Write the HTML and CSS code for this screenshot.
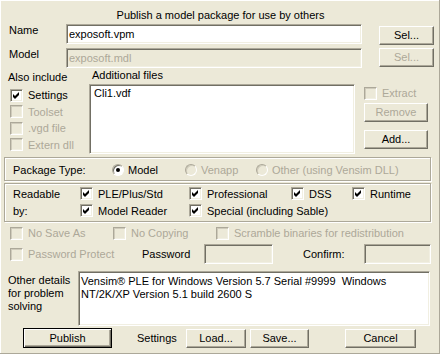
FILE: index.html
```html
<!DOCTYPE html>
<html lang="en">
<head>
    <meta charset="UTF-8">
    <title>Publish a model package</title>
    <link rel="stylesheet" href="styles.css">
</head>
<body>
    <div class="dialog">
        <div class="title">Publish a model package for use by others</div>

        <!-- Name / Model -->
        <div class="row name-row">
            <span class="lbl">Name</span>
            <div class="field field-wide">exposoft.vpm</div>
            <button class="btn btn-sel">Sel...</button>
        </div>
        <div class="row model-row">
            <span class="lbl">Model</span>
            <div class="field field-wide disabled">exposoft.mdl</div>
            <button class="btn btn-sel disabled">Sel...</button>
        </div>

        <!-- Files -->
        <div class="files">
            <div class="include">
                <div class="include-title">Also include</div>
                <div class="check"><span class="cb on"><svg width="9" height="9" viewBox="0 0 9 9"><path d="M1 3 L3 5 L7 1 L7 4 L3 8 L1 6 Z" fill="#000"/></svg></span>Settings</div>
                <div class="check off"><span class="cb"></span>Toolset</div>
                <div class="check off"><span class="cb"></span>.vgd file</div>
                <div class="check off"><span class="cb"></span>Extern dll</div>
            </div>
            <div class="additional">
                <div class="additional-title">Additional files</div>
                <div class="listbox">Cli1.vdf</div>
            </div>
            <div class="file-actions">
                <div class="check off extract"><span class="cb"></span>Extract</div>
                <button class="btn btn-side btn-remove disabled">Remove</button>
                <button class="btn btn-side btn-add">Add...</button>
            </div>
        </div>

        <!-- Package type -->
        <div class="group package">
            <span class="pt-label">Package Type:</span>
            <span class="opt opt-model"><span class="rb on"></span>Model</span>
            <span class="opt opt-venapp off"><span class="rb"></span>Venapp</span>
            <span class="opt off"><span class="rb"></span>Other (using Vensim DLL)</span>
        </div>

        <!-- Readable by -->
        <div class="group readable">
            <span class="rd-label">Readable</span>
            <div class="check"><span class="cb on"><svg width="9" height="9" viewBox="0 0 9 9"><path d="M1 3 L3 5 L7 1 L7 4 L3 8 L1 6 Z" fill="#000"/></svg></span>PLE/Plus/Std</div>
            <div class="check"><span class="cb on"><svg width="9" height="9" viewBox="0 0 9 9"><path d="M1 3 L3 5 L7 1 L7 4 L3 8 L1 6 Z" fill="#000"/></svg></span>Professional</div>
            <div class="check"><span class="cb on"><svg width="9" height="9" viewBox="0 0 9 9"><path d="M1 3 L3 5 L7 1 L7 4 L3 8 L1 6 Z" fill="#000"/></svg></span>DSS</div>
            <div class="check"><span class="cb on"><svg width="9" height="9" viewBox="0 0 9 9"><path d="M1 3 L3 5 L7 1 L7 4 L3 8 L1 6 Z" fill="#000"/></svg></span>Runtime</div>
            <span class="rd-label">by:</span>
            <div class="check"><span class="cb on"><svg width="9" height="9" viewBox="0 0 9 9"><path d="M1 3 L3 5 L7 1 L7 4 L3 8 L1 6 Z" fill="#000"/></svg></span>Model Reader</div>
            <div class="check span-rest"><span class="cb on"><svg width="9" height="9" viewBox="0 0 9 9"><path d="M1 3 L3 5 L7 1 L7 4 L3 8 L1 6 Z" fill="#000"/></svg></span>Special (including Sable)</div>
        </div>

        <!-- Protection -->
        <div class="row protect-row">
            <div class="check off cell-protect"><span class="cb"></span>No Save As</div>
            <div class="check off cell-protect"><span class="cb"></span>No Copying</div>
            <div class="check off"><span class="cb"></span>Scramble binaries for redistribution</div>
        </div>
        <div class="row password-row">
            <div class="check off cell-password"><span class="cb"></span>Password Protect</div>
            <span class="pw-label">Password</span>
            <div class="field field-pw disabled"></div>
            <span class="confirm-label">Confirm:</span>
            <div class="field field-confirm disabled"></div>
        </div>

        <!-- Details -->
        <div class="row details">
            <div class="details-label">Other details<br>for problem<br>solving</div>
            <div class="field details-box">Vensim® PLE for Windows Version 5.7 Serial #9999  Windows
NT/2K/XP Version 5.1 build 2600 S</div>
        </div>

        <!-- Actions -->
        <div class="row actions">
            <button class="btn btn-default btn-publish">Publish</button>
            <span class="settings-label">Settings</span>
            <button class="btn btn-load">Load...</button>
            <button class="btn btn-save">Save...</button>
            <button class="btn btn-cancel">Cancel</button>
        </div>
    </div>
</body>
</html>
```

FILE: styles.css
```css
:root {
    --face: #ece9d8;
    --shadow: #aca899;
    --dark: #716f64;
    --light: #f1efe2;
    --disabled: #aca899;
}

* {
    box-sizing: border-box;
    margin: 0;
    padding: 0;
}

html,
body {
    background: #fff;
}

body {
    font-family: "Liberation Sans", Arial, sans-serif;
    font-size: 11px;
    color: #000;
}

.dialog {
    width: 440px;
    height: 354px;
    background: var(--face);
    border-right: 1px solid var(--shadow);
    border-bottom: 1px solid var(--shadow);
    box-shadow: inset 1px 1px 0 #fff;
}

.title {
    height: 24px;
    padding-top: 8px;
    line-height: 14px;
    text-align: center;
    padding-left: 2px;
}

.row {
    display: flex;
    align-items: center;
}

.lbl {
    width: 66px;
    padding-left: 9px;
}

/* sunken edit box */
.field {
    background: #fff;
    border: 1px solid;
    border-color: var(--shadow) #fff #fff var(--shadow);
    box-shadow: inset 1px 1px 0 var(--dark), inset -1px -1px 0 var(--light);
    height: 20px;
    line-height: 18px;
    padding-left: 2px;
    white-space: nowrap;
    overflow: hidden;
}

.field.disabled {
    background: var(--face);
    color: var(--disabled);
}

.field-wide {
    width: 296px;
}

.name-row {
    height: 22px;
    align-items: flex-start;
}

.model-row {
    margin-top: 2px;
    height: 20px;
    align-items: flex-start;
}

/* raised push button */
.btn {
    font: inherit;
    color: #000;
    background: var(--face);
    border: 1px solid;
    border-color: #fff var(--dark) var(--dark) #fff;
    box-shadow: inset -1px -1px 0 var(--shadow);
    height: 19px;
    line-height: 15px;
    text-align: center;
}

.btn.disabled {
    color: var(--disabled);
}

.btn-default {
    border: 1px solid #000;
    box-shadow: inset 1px 1px 0 #fff, inset -1px -1px 0 var(--dark), inset -2px -2px 0 var(--shadow);
    height: 20px;
}

.btn-sel {
    width: 55px;
    margin-left: 17px;
}

.name-row .btn-sel {
    margin-top: 2px;
}

/* checkboxes */
.check {
    display: flex;
    align-items: center;
    white-space: nowrap;
}

.check.off {
    color: var(--disabled);
}

.cb {
    width: 13px;
    height: 13px;
    flex: none;
    margin-right: 5px;
    background: #fff;
    border: 1px solid;
    border-color: var(--shadow) #fff #fff var(--shadow);
    box-shadow: inset 1px 1px 0 var(--dark), inset -1px -1px 0 var(--light);
    display: flex;
    align-items: center;
    justify-content: center;
}

.check.off .cb {
    background: var(--face);
    box-shadow: inset 1px 1px 0 #cfcbbb, inset -1px -1px 0 var(--light);
}

.cb svg {
    display: block;
    margin: 0 0 0 0;
}

/* radio buttons */
.rb {
    width: 12px;
    height: 12px;
    flex: none;
    margin-right: 4px;
    border-radius: 50%;
    background: #fff;
    border: 1px solid;
    border-color: var(--shadow) #fff #fff var(--shadow);
    box-shadow: inset 1px 1px 0 var(--dark);
    display: flex;
    align-items: center;
    justify-content: center;
}

.rb.on::after {
    content: "";
    width: 4px;
    height: 4px;
    border-radius: 50%;
    background: #000;
}

.off .rb {
    background: var(--face);
    box-shadow: inset 1px 1px 0 #cfcbbb;
}

/* files area */
.files {
    display: flex;
    height: 89px;
}

.include {
    width: 89px;
}

.include-title {
    height: 19px;
    line-height: 19px;
    padding-left: 8px;
}

.include .check {
    height: 16.5px;
    padding-left: 10px;
}

.additional {
    width: 266px;
}

.additional-title {
    height: 16px;
    line-height: 14px;
    padding-left: 3px;
}

.listbox {
    height: 70px;
    background: #fff;
    border: 1px solid;
    border-color: var(--shadow) #fff #fff var(--shadow);
    box-shadow: inset 1px 1px 0 var(--dark), inset -1px -1px 0 var(--light);
    padding: 1px 4px;
    line-height: 14px;
}

.file-actions {
    margin-left: 9px;
    width: 64px;
    display: flex;
    flex-direction: column;
}

.extract {
    margin-top: 17px;
    height: 16px;
}

.btn-side {
    width: 64px;
}

.btn-remove {
    margin-top: 2px;
}

.btn-add {
    margin-top: 8px;
}

/* etched group boxes */
.group {
    margin-left: 4px;
    width: 427px;
    border: 1px solid var(--shadow);
    box-shadow: inset 1px 1px 0 #fff, 1px 1px 0 #fff;
}

.package {
    height: 24px;
    display: flex;
    align-items: center;
    padding-top: 1px;
}

.pt-label {
    width: 107px;
    padding-left: 8px;
}

.opt {
    display: flex;
    align-items: center;
    white-space: nowrap;
}

.opt.off {
    color: var(--disabled);
}

.opt-model {
    width: 73px;
}

.opt-venapp {
    width: 71px;
}

.readable {
    margin-top: 2px;
    height: 39px;
    padding-top: 1px;
    display: grid;
    grid-template-columns: 75px 109px 102px 61px 1fr;
    grid-auto-rows: 17px;
    align-items: center;
}

.rd-label {
    padding-left: 8px;
}

.span-rest {
    grid-column: 3 / span 3;
}

/* protection rows */
.protect-row {
    margin-top: 3px;
    height: 16px;
    padding-left: 10px;
}

.cell-protect {
    width: 103px;
}

.password-row {
    margin-top: 3px;
    height: 20px;
    padding-left: 10px;
}

.cell-password {
    width: 132px;
}

.pw-label {
    width: 62px;
}

.field-pw {
    width: 69px;
}

.confirm-label {
    width: 91px;
    padding-left: 30px;
}

.field-confirm {
    width: 67px;
}

/* details */
.details {
    margin-top: 7px;
    align-items: flex-start;
}

.details-label {
    width: 78px;
    padding-left: 8px;
    padding-top: 3px;
    line-height: 13px;
}

.details-box {
    width: 352px;
    height: 55px;
    white-space: pre;
    line-height: 13px;
    padding: 3px 0 0 2px;
}

/* bottom buttons */
.actions {
    margin-top: 2px;
    height: 20px;
}

.btn-publish {
    margin-left: 23px;
    width: 89px;
}

.settings-label {
    margin-left: 25px;
    width: 49px;
}

.btn-load {
    margin-left: 0;
    width: 60px;
}

.btn-save {
    margin-left: 4px;
    width: 59px;
}

.btn-cancel {
    margin-left: 36px;
    width: 71px;
}
```
